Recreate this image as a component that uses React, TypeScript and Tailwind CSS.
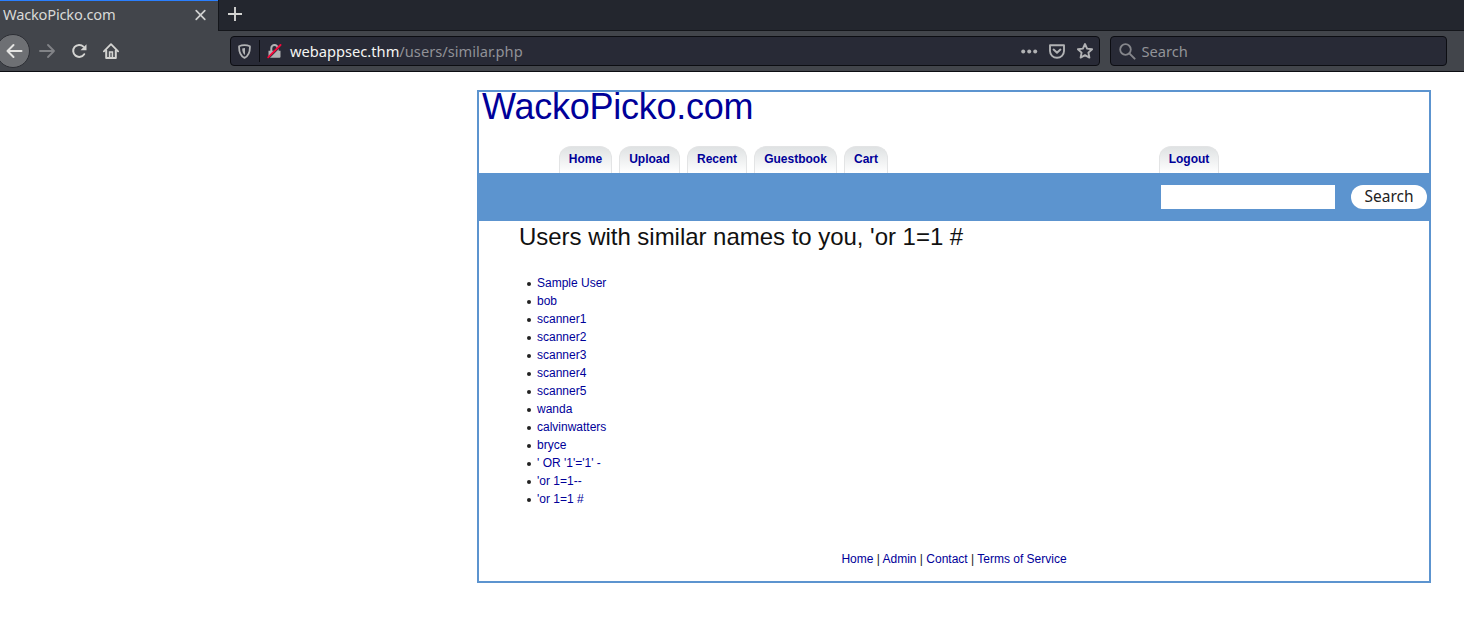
import type { ReactNode } from "react";

function BrowserTabs() {
  return (
    <div className="flex h-[31px] border-b border-[#14161b] bg-[#23262e]">
      <div className="-mb-px flex h-[31px] w-[218px] items-start justify-between border-t border-[#2a7fff] bg-[#42454b] pl-[3px] pr-[11px]">
        <span className="mt-[3px] text-[14.67px] leading-[20px] tracking-[-0.2px] text-[#d8d9d7]">WackoPicko.com</span>
        <svg width="13" height="12" viewBox="0 0 13 12" className="mt-[8px] stroke-[#cfd0d0]" strokeWidth="1.7" fill="none" strokeLinecap="round">
          <path d="M2.2 1.7l8.6 8.6M10.8 1.7l-8.6 8.6" />
        </svg>
      </div>
      <div className="-mb-px w-px bg-[#14161b]" />
      <svg width="14" height="14" viewBox="0 0 14 14" className="ml-[9px] mt-[7px] stroke-[#d4d4d2]" strokeWidth="1.9" fill="none">
        <path d="M7 0v14M0 7h14" />
      </svg>
    </div>
  );
}

function Toolbar() {
  return (
    <div className="flex h-[41px] items-start border-b border-[#0c0d12] bg-[#42454b] pt-[5px]">
      <div className="flex h-[30px] w-[230px] shrink-0 items-center">
        <div className="-ml-[4px] flex size-[34px] shrink-0 items-center justify-center rounded-full border border-[#2d2f35] bg-[#6e7074]">
          <svg width="17" height="16" viewBox="0 0 17 16" className="ml-[2px] fill-none stroke-[#e4e4e2]" strokeWidth="2" strokeLinecap="round" strokeLinejoin="round">
            <path d="M15.5 8H1.5M7.5 2L1.5 8l6 6" />
          </svg>
        </div>
        <svg width="16" height="16" viewBox="0 0 16 16" className="ml-[9px] fill-none stroke-[#818387]" strokeWidth="1.8" strokeLinecap="round" strokeLinejoin="round">
          <path d="M1 8h14M9 2l6 6-6 6" />
        </svg>
        <svg width="16" height="16" viewBox="0 0 16 16" className="ml-[16px]">
          <path d="M13.2 11.2A6 6 0 1 1 12.4 3.6" className="fill-none stroke-[#d4d4d2]" strokeWidth="2" strokeLinecap="round" />
          <path d="M15.5 1.2V7.2H9.5z" className="fill-[#d4d4d2]" />
        </svg>
        <svg width="16" height="16" viewBox="0 0 16 16" className="ml-[16px] fill-none stroke-[#d4d4d2]" strokeLinecap="round" strokeLinejoin="round">
          <path d="M.9 8.3L8 1.1l7.1 7.2" strokeWidth="1.8" />
          <path d="M3.2 7.5v7.4h9.6V7.5" strokeWidth="2" />
          <path d="M6.6 14V9h2.8v5" strokeWidth="1.6" strokeLinejoin="miter" />
        </svg>
      </div>
      <div className="flex h-[30px] w-[870px] shrink-0 items-center rounded-[4px] border border-[#0c0d12] bg-[#282a36] pl-[7px] pr-[6px]">
        <svg width="13" height="15" viewBox="0 0 13 15" className="fill-none stroke-[#b1b2b4]">
          <path d="M6.5 1.2C8 1.2 10.4 1.6 11.9 2.3c.2 5.6-.9 9.4-5.4 11.6C2 11.7.9 7.9 1.1 2.3 2.6 1.6 5 1.2 6.5 1.2z" strokeWidth="1.8" strokeLinejoin="round" />
          <path d="M7 3.9C5.8 3.9 5 4.1 4.200 4.400 4.200 7.500 5.100 9.600 7 11z" className="fill-[#b1b2b4] stroke-none" />
        </svg>
        <div className="ml-[8px] h-[22px] w-px bg-[#0c0d12]" />
        <svg width="15" height="15" viewBox="0 0 15 15" className="ml-[7px]">
          <path d="M4.3 7V4.3a3.2 3.2 0 0 1 6.4 0V7" className="fill-none stroke-[#b1b2b4]" strokeWidth="2" />
          <path d="M1.5 6.8h12v6a1 1 0 0 1-1 1h-10a1 1 0 0 1-1-1z" className="fill-[#b1b2b4]" />
          <path d="M1.5 14.2L13.5 2.2" className="stroke-[#282a36]" strokeWidth="1.6" />
          <path d="M1.2 13.3L13.5 1" className="stroke-[#f30a3b]" strokeWidth="1.9" strokeLinecap="round" />
        </svg>
        <span className="ml-[8px] flex-1 text-[14.67px] leading-[20px] text-[#909196]">
          <span className="text-[#f4f4f2]">webappsec.thm</span>/users/similar.php
        </span>
        <svg width="17" height="5" viewBox="0 0 17 5" className="fill-[#b1b2b4]">
          <circle cx="2.2" cy="2.5" r="2" />
          <circle cx="8.2" cy="2.5" r="2" />
          <circle cx="14.2" cy="2.5" r="2" />
        </svg>
        <svg width="16" height="15" viewBox="0 0 16 15" className="ml-[11px] fill-none stroke-[#b1b2b4]" strokeWidth="1.9" strokeLinecap="round" strokeLinejoin="round">
          <path d="M1 1.2h14V7a7 6.8 0 0 1-14 0z" />
          <path d="M4.6 5.6L8 8.7l3.4-3.1" strokeWidth="2" />
        </svg>
        <svg width="16" height="16" viewBox="0 0 16 16" className="ml-[12px] fill-none stroke-[#b1b2b4]" strokeWidth="1.9" strokeLinejoin="round">
          <path d="M8 1l2.1 4.6 5 .6-3.7 3.4 1 5L8 12.1l-4.4 2.5 1-5L.9 6.2l5-.6z" />
        </svg>
      </div>
      <div className="ml-[10px] flex h-[30px] w-[337px] shrink-0 items-center rounded-[4px] border border-[#0c0d12] bg-[#282a36] pl-[7.5px]">
        <svg width="17" height="17" viewBox="0 0 17 17" className="fill-none stroke-[#85868b]" strokeWidth="1.8" strokeLinecap="round">
          <circle cx="6.5" cy="6.5" r="5.3" />
          <path d="M10.6 10.6l5 5" strokeWidth="2" />
        </svg>
        <span className="ml-[6px] text-[14.67px] leading-[20px] text-[#929398]">Search</span>
      </div>
    </div>
  );
}

function NavTab({ width, children }: { width: string; children: ReactNode }) {
  return (
    <a className={"flex h-[27px] items-start justify-center rounded-t-[12px] border-x border-t border-[#e3e4e5] bg-linear-to-b from-[#dfe2e3] to-white pt-[3px] text-[12px] leading-[18px] font-bold text-[#009] " + width}>
      {children}
    </a>
  );
}

const users = [
  "Sample User", "bob", "scanner1", "scanner2", "scanner3", "scanner4", "scanner5",
  "wanda", "calvinwatters", "bryce", "' OR '1'='1' -", "'or 1=1--", "'or 1=1 #",
];

function Site() {
  return (
    <div className="ml-[477px] mt-[18px] flex h-[493px] w-[954px] flex-col border-2 border-[#5c94cf] font-['Liberation_Sans',Arial,sans-serif] text-[12px] leading-[18px] text-[#222]">
      <h1 className="h-[54px] pl-[3px] text-[36px] leading-[36px] tracking-[-0.25px] text-[#009]">
        <span className="block -mt-[3px]">WackoPicko.com</span>
      </h1>
      <nav className="flex h-[27px] gap-[7px] pl-[80px] pr-[210px]">
        <NavTab width="w-[53px]">Home</NavTab>
        <NavTab width="w-[61px]">Upload</NavTab>
        <NavTab width="w-[60px]">Recent</NavTab>
        <NavTab width="w-[83px]">Guestbook</NavTab>
        <NavTab width="w-[44px]">Cart</NavTab>
        <div className="flex-1" />
        <NavTab width="w-[60px]">Logout</NavTab>
      </nav>
      <div className="flex h-[48px] items-center justify-end gap-[16px] bg-[#5c94cf] pr-[2px]">
        <input aria-label="Query" className="h-[24px] w-[174px] bg-white px-1 outline-none" />
        <button className="h-[24px] w-[76px] rounded-full bg-white pb-[2px] font-['Noto_Sans',sans-serif] text-[15.5px] leading-[22px] text-[#222]">Search</button>
      </div>
      <main className="flex-1 pl-[40px]">
        <h2 className="h-[53px] pt-[4px] text-[24px] leading-[24px] tracking-[-0.03px] text-[#111]">Users with similar names to you, 'or 1=1 #</h2>
        <ul>
          {users.map((name) => (
            <li key={name} className="flex h-[18px] items-center">
              <span className="ml-[8px] mr-[6px] mt-[1px] size-[4px] rounded-full bg-[#222]" />
              <a className="text-[#009]">{name}</a>
            </li>
          ))}
        </ul>
      </main>
      <footer className="h-[31px] text-center">
        <a className="text-[#009]">Home</a> | <a className="text-[#009]">Admin</a> | <a className="text-[#009]">Contact</a> |{" "}
        <a className="text-[#009]">Terms of Service</a>
      </footer>
    </div>
  );
}

export default function App() {
  return (
    <div className="h-[622px] w-[1464px] overflow-hidden bg-white font-['Noto_Sans',sans-serif]">
      <BrowserTabs />
      <Toolbar />
      <Site />
    </div>
  );
}
